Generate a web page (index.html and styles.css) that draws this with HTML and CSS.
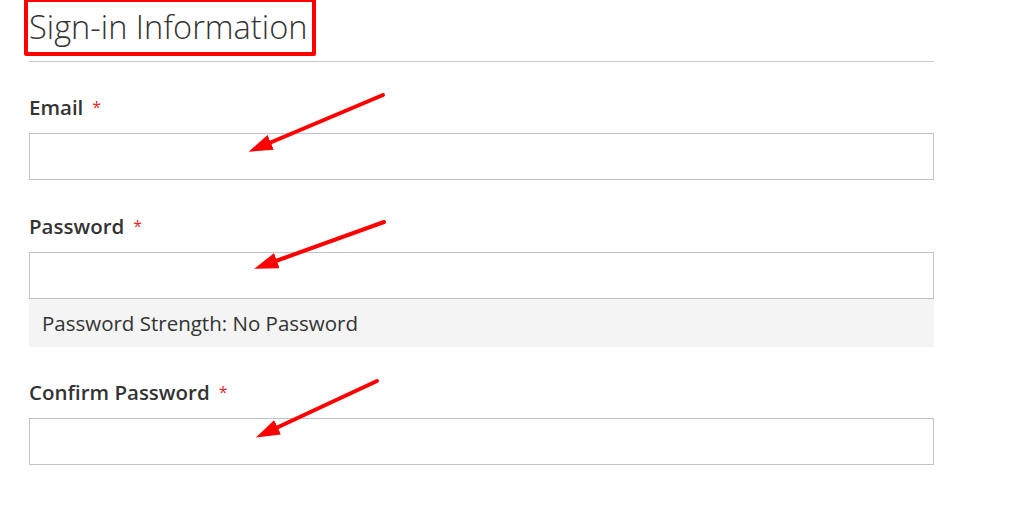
FILE: index.html
```html
<!DOCTYPE html>
<html lang="en">
  <head>
    <meta charset="UTF-8" />
    <title>Sign-in Information</title>
    <link rel="stylesheet" href="styles.css">
  </head>
  <body>
    <div class="page">
      <fieldset class="fieldset">
        <div class="legend"><span class="legend-mark">Sign-in Information</span></div>

        <div class="field required">
          <label class="label" for="email">Email</label>
          <input class="input" id="email" type="email" />
        </div>

        <div class="field required">
          <label class="label" for="password">Password</label>
          <input class="input" id="password" type="password" />
          <div class="strength">Password Strength: No Password</div>
        </div>

        <div class="field required confirm">
          <label class="label" for="confirm">Confirm Password</label>
          <input class="input" id="confirm" type="password" />
        </div>
      </fieldset>

      <svg class="arrows" width="1024" height="522" viewBox="0 0 1024 522">
        <defs>
          <marker id="head" markerUnits="userSpaceOnUse" markerWidth="26" markerHeight="18" refX="4" refY="8" orient="auto">
            <path d="M0,0 L24,8 L0,16 z" fill="#fe0000" />
          </marker>
        </defs>
        <line x1="383" y1="95" x2="267" y2="144" marker-end="url(#head)" />
        <line x1="384" y1="222" x2="273" y2="262" marker-end="url(#head)" />
        <line x1="377" y1="381" x2="274" y2="429" marker-end="url(#head)" />
      </svg>
    </div>
  </body>
</html>
```

FILE: styles.css
```css
body {
  margin: 0;
  background: #fff;
  font-family: "Open Sans", "Liberation Sans", sans-serif;
  color: #333;
}
.page {
  position: relative;
  width: 1024px;
  height: 522px;
  overflow: hidden;
}
.fieldset {
  border: none;
  margin: 0;
  padding: 0 90px 0 29px;
}
.legend {
  border-bottom: 1px solid #cccccc;
  padding-bottom: 5px;
}
.legend-mark {
  display: inline-block;
  margin-left: -5px;
  margin-top: -2px;
  padding: 2px 5px 0 1px;
  height: 48px;
  border: 4px solid #fe0000;
  border-radius: 2px;
  font-size: 32.6px;
  font-weight: 300;
  line-height: 46px;
  color: #333;
}
.field {
  margin-top: 32px;
}
.field + .field {
  margin-top: 33px;
}
.field.confirm {
  margin-top: 32px;
}
.label {
  display: block;
  font-size: 20.5px;
  font-weight: 600;
  line-height: 26px;
  margin-bottom: 13px;
}
.required .label::after {
  content: "*";
  color: #e02b27;
  font-size: 16px;
  font-weight: 400;
  margin-left: 9px;
  vertical-align: top;
}
.input {
  display: block;
  box-sizing: border-box;
  width: 100%;
  height: 47px;
  margin: 0;
  border: 1px solid #c2c2c2;
  background: #fff;
  padding: 0 12px;
  font-family: inherit;
  font-size: 18px;
}
.strength {
  background: #f4f4f4;
  height: 48px;
  line-height: 48px;
  padding-left: 13px;
  font-size: 20.5px;
  color: #333;
}
.arrows {
  position: absolute;
  left: 0;
  top: 0;
  pointer-events: none;
}
.arrows line {
  stroke: #fe0000;
  stroke-width: 4;
  stroke-linecap: round;
}
```
